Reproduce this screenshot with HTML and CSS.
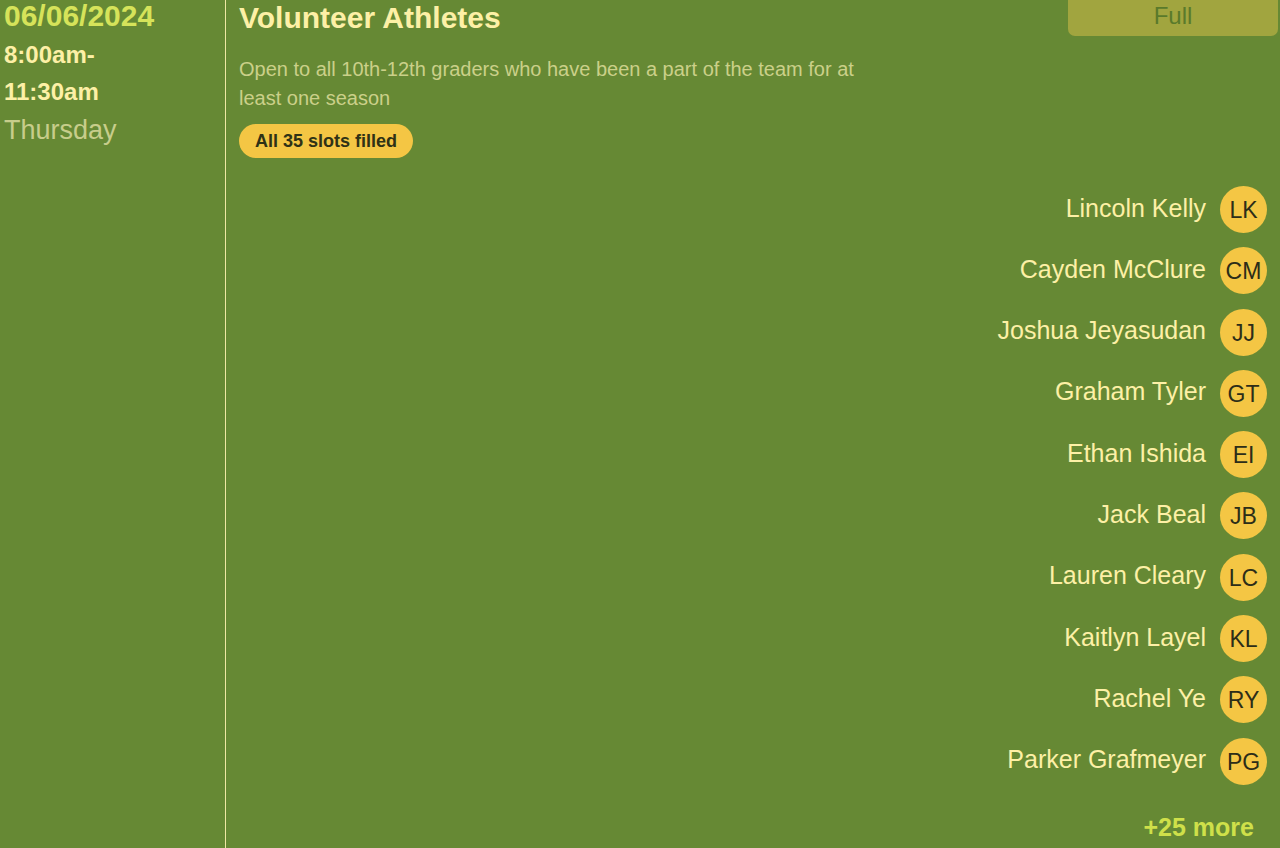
FILE: index.html
```html
<!DOCTYPE html>
<html lang="en">
<head>
<meta charset="utf-8">
<title>Volunteer Athletes</title>
<link rel="stylesheet" href="styles.css">
</head>
<body>
<div class="page">
  <aside class="when">
    <div class="date">06/06/2024</div>
    <div class="time">8:00am-<br>11:30am</div>
    <div class="day">Thursday</div>
  </aside>
  <main class="slot">
    <header class="slot-head">
      <div class="slot-info">
        <h1 class="title">Volunteer Athletes</h1>
        <p class="desc">Open to all 10th-12th graders who have been a part of the team for at least one season</p>
        <span class="badge">All 35 slots filled</span>
      </div>
      <div class="full">Full</div>
    </header>
    <ul class="people">
      <li class="person"><span class="name">Lincoln Kelly</span><span class="avatar">LK</span></li>
      <li class="person"><span class="name">Cayden McClure</span><span class="avatar">CM</span></li>
      <li class="person"><span class="name">Joshua Jeyasudan</span><span class="avatar">JJ</span></li>
      <li class="person"><span class="name">Graham Tyler</span><span class="avatar">GT</span></li>
      <li class="person"><span class="name">Ethan Ishida</span><span class="avatar">EI</span></li>
      <li class="person"><span class="name">Jack Beal</span><span class="avatar">JB</span></li>
      <li class="person"><span class="name">Lauren Cleary</span><span class="avatar">LC</span></li>
      <li class="person"><span class="name">Kaitlyn Layel</span><span class="avatar">KL</span></li>
      <li class="person"><span class="name">Rachel Ye</span><span class="avatar">RY</span></li>
      <li class="person"><span class="name">Parker Grafmeyer</span><span class="avatar">PG</span></li>
    </ul>
    <div class="more">+25 more</div>
  </main>
</div>
</body>
</html>
```

FILE: styles.css
```css
html, body {
  margin: 0;
  padding: 0;
  height: 100%;
  overflow: hidden;
}
body {
  background: #668934;
  font-family: "Liberation Sans", Arial, Helvetica, sans-serif;
}
.page {
  display: flex;
  height: 848px;
}
.when {
  width: 221px;
  padding: 0 0 0 4px;
  border-right: 1px solid #efe7a4;
  flex-shrink: 0;
}
.date {
  color: #d6e35a;
  font-weight: bold;
  font-size: 30px;
  line-height: 34px;
  margin-top: -1px;
}
.time {
  color: #fdf0a6;
  font-weight: bold;
  font-size: 24px;
  line-height: 37px;
  margin-top: 3px;
}
.day {
  color: #c7cd8b;
  font-size: 27px;
  line-height: 36px;
  margin-top: 2px;
}
.slot {
  flex: 1;
  padding: 0 2px 0 13px;
  display: flex;
  flex-direction: column;
}
.slot-head {
  display: flex;
  justify-content: space-between;
  align-items: flex-start;
}
.title {
  margin: 0;
  color: #fdf0a6;
  font-size: 30px;
  line-height: 36px;
  font-weight: bold;
}
.desc {
  margin: 19px 0 0;
  max-width: 645px;
  color: #cbd089;
  font-size: 20px;
  line-height: 29px;
}
.badge {
  display: inline-block;
  margin-top: 11px;
  background: #f4c644;
  color: #2f3216;
  font-weight: bold;
  font-size: 18px;
  line-height: 34px;
  height: 34px;
  padding: 0 16px;
  border-radius: 17px;
}
.full {
  width: 210px;
  height: 36px;
  box-sizing: border-box;
  padding-top: 2px;
  background: #a1a53f;
  color: #5a7a2b;
  font-size: 24px;
  line-height: 28px;
  text-align: center;
  border-radius: 0 0 7px 7px;
}
.people {
  list-style: none;
  margin: 28px 0 0;
  padding: 0 11px 0 0;
  display: flex;
  flex-direction: column;
  align-items: flex-end;
  gap: 14.3px;
}
.person {
  display: flex;
  align-items: center;
  gap: 14px;
  height: 47px;
}
.name {
  color: #fdf0a6;
  font-size: 25px;
  line-height: 30px;
  margin-top: -4px;
}
.avatar {
  width: 47px;
  height: 47px;
  border-radius: 50%;
  background: #f4c644;
  color: #2c2d18;
  font-size: 23px;
  display: flex;
  align-items: center;
  justify-content: center;
  padding-top: 2px;
  box-sizing: border-box;
}
.more {
  align-self: flex-end;
  margin: 27px 24px 0 0;
  color: #cfe04a;
  font-weight: bold;
  font-size: 25px;
  line-height: 30px;
}
```
